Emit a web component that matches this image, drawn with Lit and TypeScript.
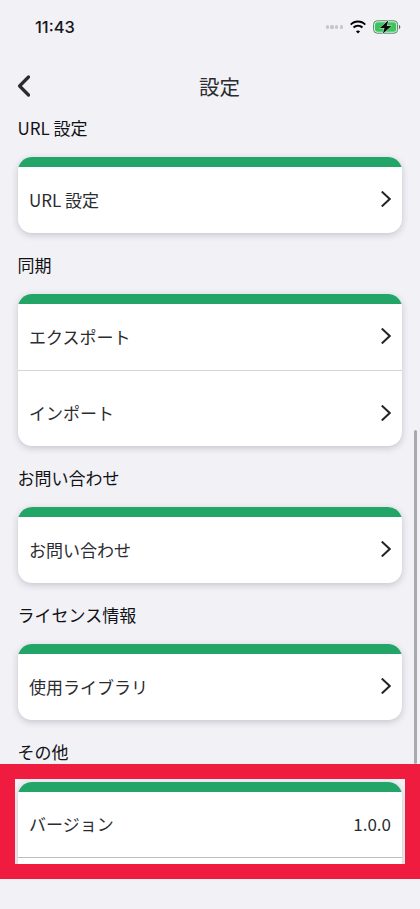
import { LitElement, html, css, svg } from "lit";
import { customElement } from "lit/decorators.js";

const chevron = html`<svg class="chev" width="10" height="16" viewBox="0 0 10 16"><path d="M1.500 1.200 8.700 8l-7.200 6.800" fill="none" stroke="#222428" stroke-width="2" stroke-linecap="square"/></svg>`;

const wifi = svg`<svg width="18" height="14" viewBox="0 0 18 14"><path d="M9 2.600c2.600 0 4.900 1 6.600 2.700l1.300-1.400C14.800 1.800 12 .6 9 .6S3.200 1.800 1.100 3.900l1.300 1.400C4.100 3.600 6.400 2.600 9 2.600zM9 6.700c1.500 0 2.800.6 3.800 1.500l1.300-1.400C12.800 5.500 11 4.700 9 4.700S5.200 5.500 3.900 6.800l1.300 1.400c1-.9 2.300-1.500 3.800-1.500zM9 10.600c-.8 0-1.500.3-2 .8L9 13.500l2-2.100c-.5-.5-1.200-.8-2-.8z" fill="#000"/></svg>`;

const battery = svg`<svg width="28" height="14" viewBox="0 0 28 14"><rect x=".6" y=".8" width="24" height="12.400" rx="3.600" fill="none" stroke="#4a8a5c" stroke-width="1"/><rect x="2" y="2.200" width="21.200" height="9.600" rx="2.400" fill="#3cc45f"/><path d="M26 5v4c.8-.3 1.300-1 1.300-2s-.5-1.700-1.300-2z" fill="#666"/><path d="M15.500.2 6.800 8h4.700L9.800 13.800 18.400 6h-4.700z" fill="#0c0c0c" stroke="#f1f1f6" stroke-width=".8" paint-order="stroke"/></svg>`;

@customElement("app-root")
export class AppRoot extends LitElement {
  static styles = css`
    :host {
      display: block;
      width: 420px;
      height: 909px;
      overflow: hidden;
      position: relative;
      background: #f1f1f6;
      color: #222428;
      font-family: "Noto Sans CJK JP", "Noto Sans", sans-serif;
    }
    .status {
      height: 54px;
      box-sizing: border-box;
      display: flex;
      justify-content: space-between;
      align-items: center;
      padding: 0 19px 0 35px;
    }
    .time {
      font-family: Inter, sans-serif;
      font-weight: 500;
      font-size: 16.500px;
      color: #16171a;
    }
    .indicators {
      display: flex;
      align-items: center;
      gap: 6px;
    }
    .dots {
      display: flex;
      gap: 1.500px;
    }
    .dots i {
      width: 3.200px;
      height: 3.200px;
      border-radius: 50%;
      background: #c6c6ca;
    }
    .nav {
      height: 50px;
      margin-top: 7px;
      display: flex;
      align-items: center;
      padding: 0 16px;
      box-sizing: border-box;
    }
    .nav h1 {
      margin: 0 0 0 169px;
      font-size: 20.500px;
      font-weight: 400;
      color: #2a2c30;
    }
    .content {
      display: flex;
      flex-direction: column;
      padding-top: 5px;
    }
    .section {
      display: flex;
      flex-direction: column;
      padding: 0 18px 20px;
    }
    .label {
      font-size: 17px;
      line-height: 24px;
      font-weight: 400;
      color: #111215;
      margin-bottom: 17px;
      margin-left: -0.5px;
    }
    .card {
      background: #fff;
      border-radius: 14px;
      overflow: hidden;
      box-shadow: 0 2px 7px rgba(40, 40, 60, 0.22);
    }
    .bar {
      height: 10px;
      background: #22a566;
    }
    .row {
      height: 66px;
      box-sizing: border-box;
      display: flex;
      align-items: center;
      justify-content: space-between;
      padding: 0 11px 2px;
      font-size: 17px;
      color: #2a2c30;
    }
    .row + .row {
      height: 76px;
      padding-top: 10px;
      border-top: 1.500px solid #d5d5d8;
    }
    .last-label {
      padding: 0 17.500px;
      font-size: 17px;
      line-height: 24px;
      font-weight: 400;
      color: #111215;
    }
    .highlight {
      border: 15px solid #ef1c3f;
      height: 82px;
      padding: 3px 3px 0;
      overflow: hidden;
    }
    .highlight .card {
      height: 100px;
    }
    .highlight .row {
      border-bottom: 1px solid #bdbdbd;
    }
    .scrollbar {
      position: absolute;
      left: 414px;
      top: 430px;
      width: 3px;
      height: 334px;
      border-radius: 2px;
      background: #a9a9ae;
    }
  `;

  private section(title: string, rows: string[]) {
    return html`<div class="section">
      <div class="label">${title}</div>
      <div class="card">
        <div class="bar"></div>
        ${rows.map((r) => html`<div class="row"><span>${r}</span>${chevron}</div>`)}
      </div>
    </div>`;
  }

  render() {
    return html`
      <div class="status">
        <span class="time">11:43</span>
        <div class="indicators">
          <div class="dots"><i></i><i></i><i></i><i></i></div>
          ${wifi}${battery}
        </div>
      </div>
      <div class="nav">
        <svg width="14" height="22" viewBox="0 0 14 22"><path d="M12.500 2 3.600 11l8.900 9" fill="none" stroke="#2a2c30" stroke-width="3.200" stroke-linecap="round" stroke-linejoin="round"/></svg>
        <h1>設定</h1>
      </div>
      <div class="content">
        ${this.section("URL 設定", ["URL 設定"])}
        ${this.section("同期", ["エクスポート", "インポート"])}
        ${this.section("お問い合わせ", ["お問い合わせ"])}
        ${this.section("ライセンス情報", ["使用ライブラリ"])}
        <div class="last-label">その他</div>
        <div class="highlight">
          <div class="card">
            <div class="bar"></div>
            <div class="row"><span>バージョン</span><span>1.0.0</span></div>
          </div>
        </div>
      </div>
      <div class="scrollbar"></div>
    `;
  }
}
